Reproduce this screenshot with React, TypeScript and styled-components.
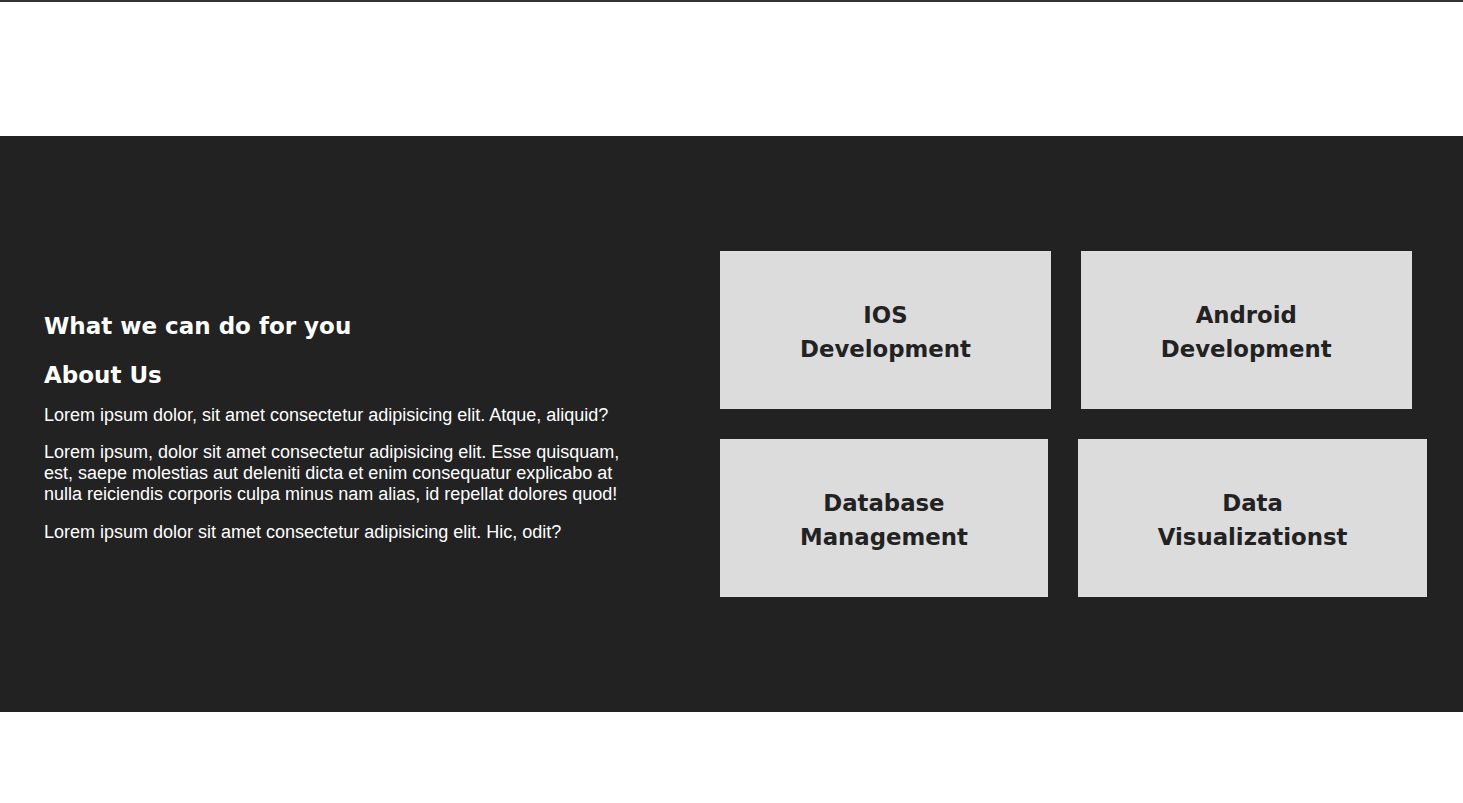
import React from "react";
import styled, { createGlobalStyle } from "styled-components";

const GlobalStyle = createGlobalStyle`
  html, body {
    margin: 0;
    padding: 0;
    background: #ffffff;
  }
  body {
    font-family: "Liberation Sans", Arial, sans-serif;
  }
  * { box-sizing: border-box; }
`;

const Page = styled.div`
  display: flex;
  flex-direction: column;
  width: 100%;
`;

const Header = styled.header`
  height: 136px;
  border-top: 2px solid #333333;
  background: #ffffff;
`;

const Section = styled.section`
  height: 576px;
  background: #222222;
  display: flex;
  align-items: center;
  padding-left: 44px;
`;

const About = styled.div`
  width: 590px;
  margin-right: 86px;
  padding-top: 3px;
  color: #ffffff;
`;

const Heading = styled.h2<{ $gap: number }>`
  margin: 0 0 ${(p) => p.$gap}px;
  font-family: "DejaVu Sans", "Liberation Sans", sans-serif;
  font-weight: 700;
  font-size: 23px;
  line-height: 34px;
  color: #ffffff;
`;

const Paragraph = styled.p`
  margin: 0 0 17px;
  font-family: "Liberation Sans", Arial, sans-serif;
  font-size: 18px;
  line-height: 20.7px;
  color: #ffffff;
  &:last-child { margin-bottom: 0; }
`;

const Services = styled.div`
  width: 720px;
  display: flex;
  flex-wrap: wrap;
  gap: 30px;
`;

const Card = styled.div`
  background: #dcdcdc;
  padding: 47px 80px 43px;
  display: flex;
  justify-content: center;
`;

const CardTitle = styled.h3`
  margin: 0;
  width: min-content;
  text-align: center;
  font-family: "DejaVu Sans", "Liberation Sans", sans-serif;
  font-weight: 700;
  font-size: 22.8px;
  line-height: 34px;
  color: #222222;
`;

const Footer = styled.footer`
  height: 91px;
  background: #ffffff;
`;

const services = [
  "IOS Development",
  "Android Development",
  "Database Management",
  "Data Visualizationst",
];

export default function App() {
  return (
    <>
      <GlobalStyle />
      <Page>
        <Header />
        <Section>
          <About>
            <Heading $gap={15}>What we can do for you</Heading>
            <Heading $gap={13}>About Us</Heading>
            <Paragraph>
              Lorem ipsum dolor, sit amet consectetur adipisicing elit. Atque, aliquid?
            </Paragraph>
            <Paragraph>
              Lorem ipsum, dolor sit amet consectetur adipisicing elit. Esse quisquam,
              est, saepe molestias aut deleniti dicta et enim consequatur explicabo at
              nulla reiciendis corporis culpa minus nam alias, id repellat dolores quod!
            </Paragraph>
            <Paragraph>
              Lorem ipsum dolor sit amet consectetur adipisicing elit. Hic, odit?
            </Paragraph>
          </About>
          <Services>
            {services.map((s) => (
              <Card key={s}>
                <CardTitle>{s}</CardTitle>
              </Card>
            ))}
          </Services>
        </Section>
        <Footer />
      </Page>
    </>
  );
}
